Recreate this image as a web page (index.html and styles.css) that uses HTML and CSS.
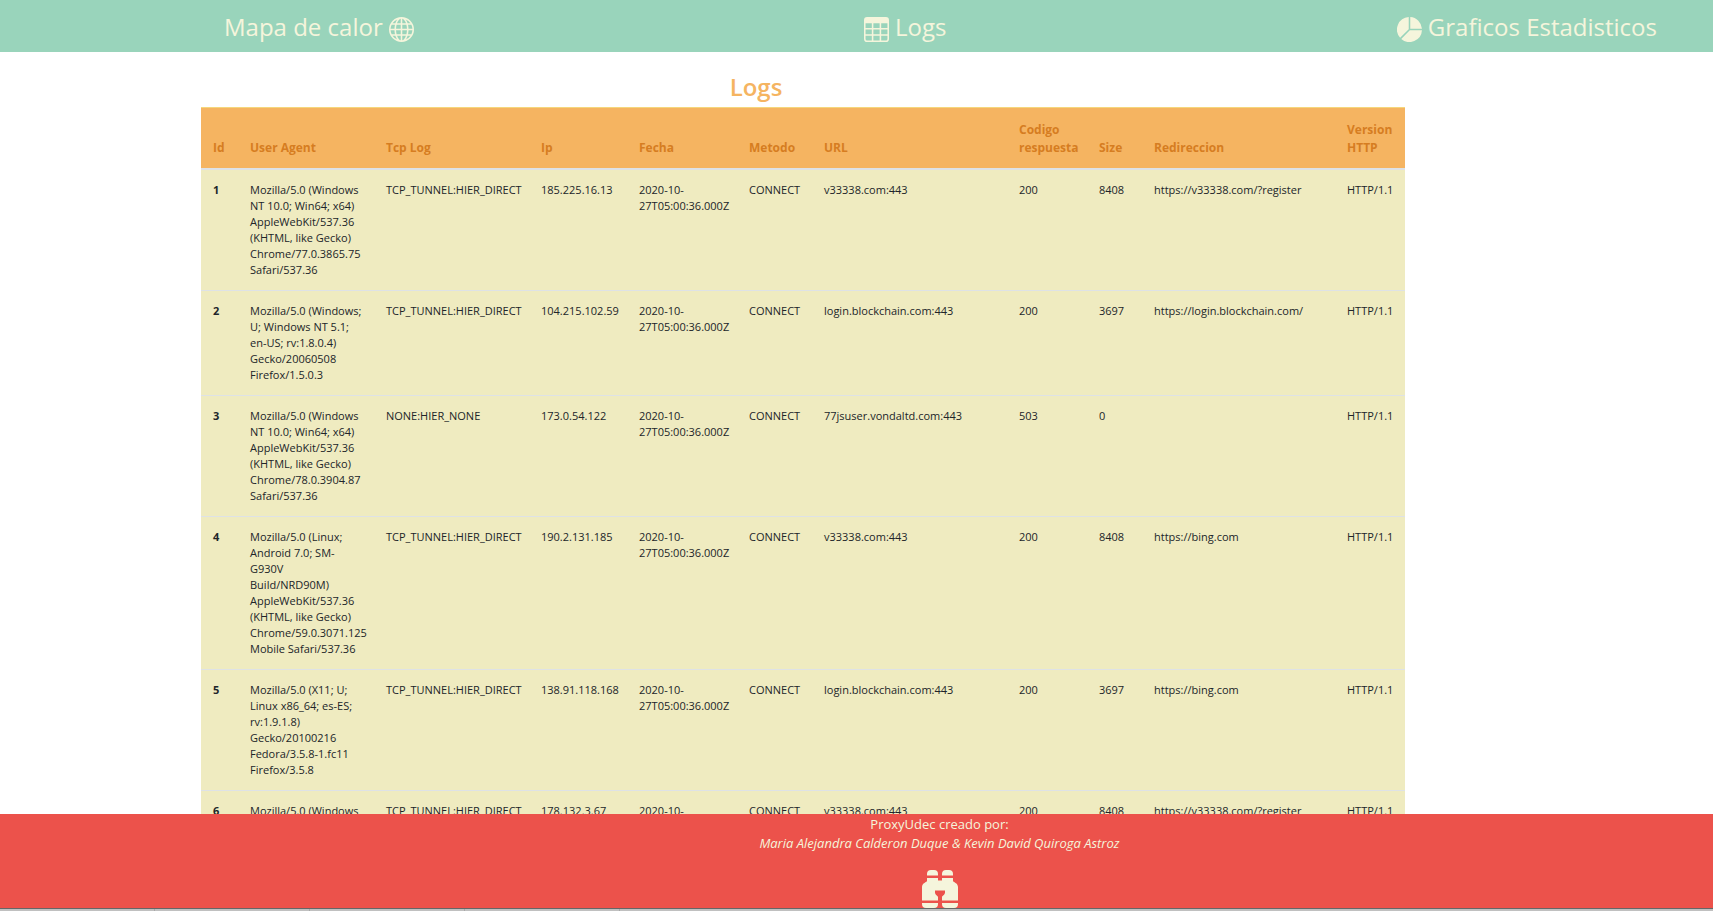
FILE: index.html
```html
<!DOCTYPE html>
<html lang="es">
<head>
<meta charset="utf-8">
<title>Logs</title>
<link rel="stylesheet" href="styles.css">
</head>
<body>
<nav class="nav">
  <a class="nav-link" href="#mapa">Mapa de calor
    <svg class="icon" viewBox="0 0 16 16" fill="currentColor" aria-hidden="true"><path fill-rule="evenodd" d="M0 8a8 8 0 1 1 16 0A8 8 0 0 1 0 8zm7.5-6.923c-.67.204-1.335.82-1.887 1.855A7.97 7.97 0 0 0 5.145 4H7.5V1.077zM4.09 4a9.267 9.267 0 0 1 .64-1.539 6.7 6.7 0 0 1 .597-.933A7.025 7.025 0 0 0 2.255 4H4.09zm-.582 3.5c.03-.877.138-1.718.312-2.5H1.674a6.958 6.958 0 0 0-.656 2.5h2.49zM4.847 5a12.5 12.5 0 0 0-.338 2.5H7.5V5H4.847zM8.5 5v2.5h2.99a12.495 12.495 0 0 0-.337-2.5H8.5zM4.51 8.5a12.5 12.5 0 0 0 .337 2.5H7.5V8.5H4.51zm3.99 0V11h2.653c.187-.765.306-1.608.338-2.5H8.5zM5.145 12c.138.386.295.744.468 1.068.552 1.035 1.218 1.65 1.887 1.855V12H5.145zm.182 2.472a6.696 6.696 0 0 1-.597-.933A9.268 9.268 0 0 1 4.09 12H2.255a7.024 7.024 0 0 0 3.072 2.472zM3.82 11a13.652 13.652 0 0 1-.312-2.5h-2.49c.062.89.291 1.733.656 2.5H3.82zm6.853 3.472A7.024 7.024 0 0 0 13.745 12H11.91a9.27 9.27 0 0 1-.64 1.539 6.688 6.688 0 0 1-.597.933zM8.5 12v2.923c.67-.204 1.335-.82 1.887-1.855.173-.324.33-.682.468-1.068H8.5zm3.68-1h2.146c.365-.767.594-1.61.656-2.5h-2.49a13.65 13.65 0 0 1-.312 2.5zm2.802-3.5a6.959 6.959 0 0 0-.656-2.5H12.18c.174.782.282 1.623.312 2.5h2.49zM11.27 2.461c.247.464.462.98.64 1.539h1.835a7.024 7.024 0 0 0-3.072-2.472c.218.284.418.598.597.933zM10.855 4a7.966 7.966 0 0 0-.468-1.068C9.835 1.897 9.17 1.282 8.5 1.077V4h2.355z"/></svg>
  </a>
  <a class="nav-link" href="#logs">
    <svg class="icon" viewBox="0 0 16 16" fill="currentColor" aria-hidden="true"><path fill-rule="evenodd" d="M0 2a2 2 0 0 1 2-2h12a2 2 0 0 1 2 2v12a2 2 0 0 1-2 2H2a2 2 0 0 1-2-2V2zm15 2h-4v3h4V4zm0 4h-4v3h4V8zm0 4h-4v3h3a1 1 0 0 0 1-1v-2zm-5 3v-3H6v3h4zm-5 0v-3H1v2a1 1 0 0 0 1 1h3zm-4-4h4V8H1v3zm0-4h4V4H1v3zm5-3v3h4V4H6zm4 4H6v3h4V8z"/></svg>
    Logs</a>
  <a class="nav-link" href="#graficos">
    <svg class="icon" viewBox="0 0 16 16" fill="currentColor" aria-hidden="true"><path d="M15.985 8.5H8.207l-5.5 5.5a8 8 0 0 0 13.277-5.5zM2 13.292A8 8 0 0 1 7.5.015v7.778l-5.5 5.5zM8.5.015V7.5h7.485A8.001 8.001 0 0 0 8.5.015z"/></svg>
    Graficos Estadisticos</a>
</nav>
<main class="content">
  <h1 class="title">Logs</h1>
  <table class="logs">
    <colgroup>
      <col class="c-id"><col class="c-agent"><col class="c-tcp"><col class="c-ip"><col class="c-date"><col class="c-method"><col class="c-url"><col class="c-code"><col class="c-size"><col class="c-redirect"><col class="c-version">
    </colgroup>
    <thead>
      <tr><th scope="col">Id</th><th scope="col">User Agent</th><th scope="col">Tcp Log</th><th scope="col">Ip</th><th scope="col">Fecha</th><th scope="col">Metodo</th><th scope="col">URL</th><th scope="col">Codigo respuesta</th><th scope="col">Size</th><th scope="col">Redireccion</th><th scope="col">Version HTTP</th></tr>
    </thead>
    <tbody>
      <tr><th scope="row">1</th><td>Mozilla/5.0 (Windows NT 10.0; Win64; x64) AppleWebKit/537.36 (KHTML, like Gecko) Chrome/77.0.3865.75 Safari/537.36</td><td>TCP_TUNNEL:HIER_DIRECT</td><td>185.225.16.13</td><td>2020-10-27T05:00:36.000Z</td><td>CONNECT</td><td>v33338.com:443</td><td>200</td><td>8408</td><td>https://v33338.com/?register</td><td>HTTP/1.1</td></tr>
      <tr><th scope="row">2</th><td>Mozilla/5.0 (Windows; U; Windows NT 5.1; en-US; rv:1.8.0.4) Gecko/20060508 Firefox/1.5.0.3</td><td>TCP_TUNNEL:HIER_DIRECT</td><td>104.215.102.59</td><td>2020-10-27T05:00:36.000Z</td><td>CONNECT</td><td>login.blockchain.com:443</td><td>200</td><td>3697</td><td>https://login.blockchain.com/</td><td>HTTP/1.1</td></tr>
      <tr><th scope="row">3</th><td>Mozilla/5.0 (Windows NT 10.0; Win64; x64) AppleWebKit/537.36 (KHTML, like Gecko) Chrome/78.0.3904.87 Safari/537.36</td><td>NONE:HIER_NONE</td><td>173.0.54.122</td><td>2020-10-27T05:00:36.000Z</td><td>CONNECT</td><td>77jsuser.vondaltd.com:443</td><td>503</td><td>0</td><td></td><td>HTTP/1.1</td></tr>
      <tr><th scope="row">4</th><td>Mozilla/5.0 (Linux; Android 7.0; SM-G930V Build/NRD90M) AppleWebKit/537.36 (KHTML, like Gecko) Chrome/59.0.3071.125 Mobile Safari/537.36</td><td>TCP_TUNNEL:HIER_DIRECT</td><td>190.2.131.185</td><td>2020-10-27T05:00:36.000Z</td><td>CONNECT</td><td>v33338.com:443</td><td>200</td><td>8408</td><td>https://bing.com</td><td>HTTP/1.1</td></tr>
      <tr><th scope="row">5</th><td>Mozilla/5.0 (X11; U; Linux x86_64; es-ES; rv:1.9.1.8) Gecko/20100216 Fedora/3.5.8-1.fc11 Firefox/3.5.8</td><td>TCP_TUNNEL:HIER_DIRECT</td><td>138.91.118.168</td><td>2020-10-27T05:00:36.000Z</td><td>CONNECT</td><td>login.blockchain.com:443</td><td>200</td><td>3697</td><td>https://bing.com</td><td>HTTP/1.1</td></tr>
      <tr><th scope="row">6</th><td>Mozilla/5.0 (Windows</td><td>TCP_TUNNEL:HIER_DIRECT</td><td>178.132.3.67</td><td>2020-10-</td><td>CONNECT</td><td>v33338.com:443</td><td>200</td><td>8408</td><td>https://v33338.com/?register</td><td>HTTP/1.1</td></tr>
    </tbody>
  </table>
</main>
<footer class="footer">
  <div class="credits">
    <p>ProxyUdec creado por:</p>
    <p><em>Maria Alejandra Calderon Duque &amp; Kevin David Quiroga Astroz</em></p>
    <svg class="binoculars" viewBox="0 0 36 38" fill="currentColor" aria-hidden="true"><path d="M5 5.500V4a4 4 0 0 1 4-4h3a4 4 0 0 1 4 4v1.500zM20 5.500V4a4 4 0 0 1 4-4h3a4 4 0 0 1 4 4v1.500zM5 8h11v2.500h4V8h11v3c0 1 5 2 5 6v13.500H20V27c0-1 3-2 3-4.500V20.500H13v2c0 2.500 3 3.500 3 4.500v3.500H0V17c0-4 5-5 5-6zM0 33h16v1a4 4 0 0 1-4 4H4a4 4 0 0 1-4-4zM20 33h16v1a4 4 0 0 1-4 4h-8a4 4 0 0 1-4-4z"/></svg>
  </div>
  <div class="statusbar"><i></i><i></i><i></i><i></i></div>
</footer>
</body>
</html>
```
FILE: styles.css
```css
* { box-sizing: border-box; }
body {
  margin: 0;
  height: 100vh;
  overflow: hidden;
  display: flex;
  flex-direction: column;
  background: #fff;
  color: #212529;
  font-family: "Segoe UI", "Open Sans", "Noto Sans", sans-serif;
}
.nav {
  flex: none;
  display: flex;
  justify-content: space-between;
  align-items: center;
  height: 52px;
  padding: 2px 56px 0 224px;
  background: #99d4bb;
}
.nav-link {
  display: flex;
  align-items: center;
  gap: 6px;
  color: beige;
  font-size: 24px;
  line-height: 36px;
  text-decoration: none;
  white-space: nowrap;
}
.icon { width: 25px; height: 25px; margin-top: 4px; }
.content {
  flex: 1;
  min-height: 0;
  overflow: hidden;
  padding: 20px 308px 0 201px;
}
.title {
  margin: 0 94px 5px 0;
  color: #f5b461;
  font-size: 24px;
  font-weight: 600;
  line-height: 30px;
  text-align: center;
}
.logs {
  width: 100%;
  table-layout: fixed;
  border-collapse: separate;
  border-spacing: 0;
  background: #efebc0;
  font-size: 11px;
  line-height: 16px;
}
.logs th, .logs td {
  padding: 12px;
  border-top: 1px solid #dee2e6;
  text-align: left;
  vertical-align: top;
}
.logs td { padding-right: 10px; }
.logs thead th {
  padding: 13px 12px 11px;
  border-top-color: #f5d77c;
  border-bottom: 2px solid #dee2e6;
  background: #f5b461;
  color: #d67d21;
  font-size: 12px;
  line-height: 18px;
  vertical-align: bottom;
}
.logs tbody tr:first-child > * { border-top: 0; }
.c-id { width: 37px; }
.c-agent { width: 136px; }
.c-tcp { width: 155px; }
.c-ip { width: 98px; }
.c-date { width: 110px; }
.c-method { width: 75px; }
.c-url { width: 195px; }
.c-code { width: 80px; }
.c-size { width: 55px; }
.c-redirect { width: 193px; }
.c-version { width: 70px; }
.footer {
  flex: none;
  background: #ec524b;
  color: beige;
  font-size: 13px;
  line-height: 19px;
}
.credits {
  display: flex;
  flex-direction: column;
  align-items: center;
  padding: 1px 0 0 166px;
}
.credits p { margin: 0; }
.binoculars { width: 36px; height: 38px; margin-top: 17px; }
.statusbar { display: flex; height: 3px; border-top: 1px solid #666; background: #c0c0c0; }
.statusbar i { width: 156px; margin-left: -1px; border-right: 1px solid #a8a8a8; }
```
